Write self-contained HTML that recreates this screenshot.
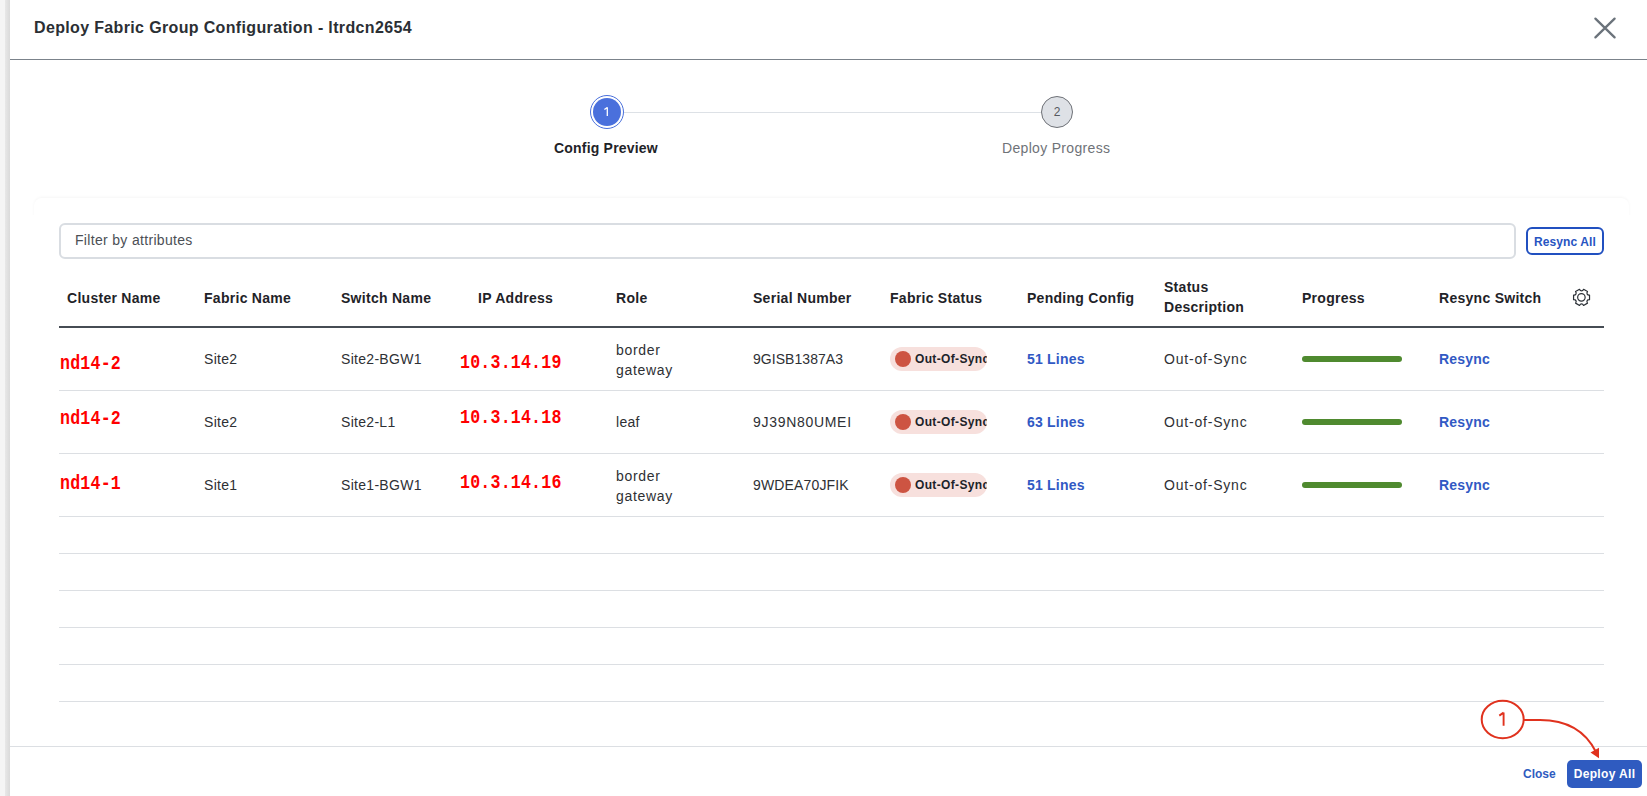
<!DOCTYPE html>
<html><head><meta charset="utf-8">
<style>
*{box-sizing:border-box;margin:0;padding:0}
html,body{width:1647px;height:796px;overflow:hidden;background:#fff}
body{position:relative;font-family:"Liberation Sans",sans-serif;color:#39393b}
.a{position:absolute;white-space:nowrap}
#strip{left:0;top:0;width:10px;height:796px;background:linear-gradient(to right,#f5f5f5 0,#f5f5f5 5px,#e8e8e8 5px,#dadada 10px)}
#title{left:34px;top:18px;font-size:16px;line-height:20px;font-weight:bold;color:#2b2f34;letter-spacing:0.35px}
#hdrline{left:10px;top:59px;width:1637px;height:1px;background:#7b838b}
.th{font-size:14px;font-weight:bold;color:#1f2328;line-height:20px;letter-spacing:0.28px}
.td{font-size:14px;color:#2e3034;line-height:20px;letter-spacing:0.3px}
.dsc{letter-spacing:0.8px}
.red{font-family:"Liberation Mono",monospace;font-weight:bold;color:#ff0000;font-size:16.6px;line-height:20px;letter-spacing:0.2px;transform:scaleY(1.22);transform-origin:0 2px}
.rb{left:59px;width:1545px;height:1px;background:#dcdfe3}
.badge{width:97px;height:24px;border-radius:12px;background:#f7e0dd;overflow:hidden}
.badge .dot{position:absolute;left:5px;top:4px;width:16px;height:16px;border-radius:50%;background:#cd5442}
.badge .bt{position:absolute;left:25px;top:0;line-height:24px;font-size:12px;font-weight:bold;color:#1e2329;letter-spacing:0.35px}
.lnk{font-size:14px;font-weight:bold;color:#3159c4;line-height:20px;letter-spacing:0.2px}
.prog{width:100px;height:6px;border-radius:3px;background:#4f8a2f}
</style></head><body>
<div id="strip" class="a"></div>
<div id="title" class="a">Deploy Fabric Group Configuration - ltrdcn2654</div>
<svg class="a" style="left:1590px;top:15px" width="30" height="26" viewBox="0 0 30 26"><path d="M5.4 3.6 L24.6 22.4 M24.6 3.6 L5.4 22.4" stroke="#6b737b" stroke-width="2.3" stroke-linecap="round"/></svg>
<div id="hdrline" class="a"></div>

<!-- stepper -->
<div class="a" style="left:624px;top:112px;width:417px;height:1px;background:#dde1e6"></div>
<div class="a" style="left:590px;top:95px;width:34px;height:34px;border-radius:50%;border:1.2px solid #4a70dc"></div>
<div class="a" style="left:593px;top:98px;width:28px;height:28px;border-radius:50%;background:#4a70dc"></div><svg class="a" style="left:600px;top:104px" width="14" height="16" viewBox="600 104 14 16"><path d="M607.3 107.2 L607.3 116 M607.3 107.4 L604.4 109.6" fill="none" stroke="#fff" stroke-width="1.3"/></svg>
<div class="a" style="left:1041px;top:96px;width:32px;height:32px;border-radius:50%;border:1.2px solid #6e7177;background:#dee1e6;color:#55595e;font-size:12px;line-height:30px;text-align:center">2</div>
<div class="a" style="left:554px;top:138px;font-size:14px;line-height:20px;font-weight:bold;color:#1f2328;letter-spacing:0.2px">Config Preview</div>
<div class="a" style="left:1002px;top:138px;font-size:14px;line-height:20px;color:#6f7378;letter-spacing:0.32px">Deploy Progress</div>
<!-- card -->
<div class="a" style="left:24px;top:185px;width:1615px;height:30px;overflow:hidden"><div style="position:absolute;left:10px;top:13px;width:1595px;height:60px;border-radius:8px;box-shadow:0 -1px 3px rgba(0,0,0,0.04)"></div></div>
<!-- filter -->
<div class="a" style="left:59px;top:223px;width:1457px;height:36px;border:2px solid #d9dde2;border-radius:6px"></div>
<div class="a" style="left:75px;top:230px;font-size:14px;line-height:20px;color:#4b4f55;letter-spacing:0.32px">Filter by attributes</div>
<div class="a" style="left:1526px;top:227px;width:78px;height:28px;border:2px solid #2150c0;border-radius:6px;font-size:12px;font-weight:bold;color:#2754c2;line-height:26px;text-align:center;letter-spacing:0.1px">Resync All</div>
<!-- gear -->
<svg class="a" style="left:1571px;top:287px" width="21" height="21" viewBox="0 0 21 21"><path d="M18.53 12.64L18.53 8.06C16.31 8.37 15.15 6.35 16.52 4.58L12.56 2.30C11.71 4.37 9.39 4.37 8.54 2.30L4.58 4.58C5.95 6.35 4.79 8.37 2.57 8.06L2.57 12.64C4.79 12.33 5.95 14.35 4.58 16.12L8.54 18.40C9.39 16.33 11.71 16.33 12.56 18.40L16.52 16.12C15.15 14.35 16.31 12.33 18.53 12.64Z" fill="none" stroke="#2b3036" stroke-width="1.2" stroke-linejoin="round"/><circle cx="10.4" cy="10.3" r="3.75" fill="none" stroke="#2b3036" stroke-width="1.2"/></svg>
<div class="a th" style="left:67px;top:288px">Cluster Name</div>
<div class="a th" style="left:204px;top:288px">Fabric Name</div>
<div class="a th" style="left:341px;top:288px">Switch Name</div>
<div class="a th" style="left:478px;top:288px">IP Address</div>
<div class="a th" style="left:616px;top:288px">Role</div>
<div class="a th" style="left:753px;top:288px">Serial Number</div>
<div class="a th" style="left:890px;top:288px">Fabric Status</div>
<div class="a th" style="left:1027px;top:288px">Pending Config</div>
<div class="a th" style="left:1164px;top:277px">Status<br>Description</div>
<div class="a th" style="left:1302px;top:288px">Progress</div>
<div class="a th" style="left:1439px;top:288px">Resync Switch</div>
<div class="a" style="left:59px;top:326px;width:1545px;height:2px;background:#464c54"></div>
<div class="a red" style="left:60px;top:352px">nd14-2</div>
<div class="a td" style="left:204px;top:349px">Site2</div>
<div class="a td" style="left:341px;top:349px">Site2-BGW1</div>
<div class="a red" style="left:460px;top:351px">10.3.14.19</div>
<div class="a td" style="left:616px;top:340px;letter-spacing:0.7px">border<br>gateway</div>
<div class="a td" style="left:753px;top:349px;letter-spacing:0.05px">9GISB1387A3</div>
<div class="a badge" style="left:890px;top:347px"><div class="dot"></div><div class="bt">Out-Of-Sync</div></div>
<div class="a lnk" style="left:1027px;top:349px">51 Lines</div>
<div class="a td dsc" style="left:1164px;top:349px">Out-of-Sync</div>
<div class="a prog" style="left:1302px;top:356px"></div>
<div class="a lnk" style="left:1439px;top:349px">Resync</div>
<div class="a rb" style="top:390px"></div>
<div class="a red" style="left:60px;top:407px">nd14-2</div>
<div class="a td" style="left:204px;top:412px">Site2</div>
<div class="a td" style="left:341px;top:412px">Site2-L1</div>
<div class="a red" style="left:460px;top:406px">10.3.14.18</div>
<div class="a td" style="left:616px;top:412px">leaf</div>
<div class="a td" style="left:753px;top:412px;letter-spacing:0.7px">9J39N80UMEI</div>
<div class="a badge" style="left:890px;top:410px"><div class="dot"></div><div class="bt">Out-Of-Sync</div></div>
<div class="a lnk" style="left:1027px;top:412px">63 Lines</div>
<div class="a td dsc" style="left:1164px;top:412px">Out-of-Sync</div>
<div class="a prog" style="left:1302px;top:419px"></div>
<div class="a lnk" style="left:1439px;top:412px">Resync</div>
<div class="a rb" style="top:453px"></div>
<div class="a red" style="left:60px;top:472px">nd14-1</div>
<div class="a td" style="left:204px;top:475px">Site1</div>
<div class="a td" style="left:341px;top:475px">Site1-BGW1</div>
<div class="a red" style="left:460px;top:471px">10.3.14.16</div>
<div class="a td" style="left:616px;top:466px;letter-spacing:0.7px">border<br>gateway</div>
<div class="a td" style="left:753px;top:475px;letter-spacing:0.15px">9WDEA70JFIK</div>
<div class="a badge" style="left:890px;top:473px"><div class="dot"></div><div class="bt">Out-Of-Sync</div></div>
<div class="a lnk" style="left:1027px;top:475px">51 Lines</div>
<div class="a td dsc" style="left:1164px;top:475px">Out-of-Sync</div>
<div class="a prog" style="left:1302px;top:482px"></div>
<div class="a lnk" style="left:1439px;top:475px">Resync</div>
<div class="a rb" style="top:516px"></div>
<div class="a rb" style="top:553px"></div>
<div class="a rb" style="top:590px"></div>
<div class="a rb" style="top:627px"></div>
<div class="a rb" style="top:664px"></div>
<div class="a rb" style="top:701px"></div>
<div class="a" style="left:10px;top:746px;width:1637px;height:1px;background:#dcdfe3"></div>
<div class="a" style="left:1523px;top:764px;font-size:12px;font-weight:bold;color:#2f5bc0;line-height:20px">Close</div>
<div class="a" style="left:1567px;top:760px;width:75px;height:28px;border-radius:5px;background:#2f5bc0;color:#fff;font-size:12px;font-weight:bold;line-height:28px;text-align:center;letter-spacing:0.35px">Deploy All</div>
<!-- annotation -->
<svg class="a" style="left:1470px;top:690px" width="177" height="80" viewBox="1470 690 177 80">
<ellipse cx="1502.7" cy="719.5" rx="21" ry="18.7" fill="none" stroke="#e0321e" stroke-width="2"/>
<path d="M1503.6 712.4 L1503.6 725.8 M1503.6 712.6 L1499.3 715.6" fill="none" stroke="#e0321e" stroke-width="1.9"/>
<path d="M1524 720 L1540 720 C1570 720 1587 734 1596 752" fill="none" stroke="#e0321e" stroke-width="2"/>
<path d="M1590.5 752.6 L1599 747.8 L1599 758.3 Z" fill="#e0321e"/>
</svg>
</body></html>
